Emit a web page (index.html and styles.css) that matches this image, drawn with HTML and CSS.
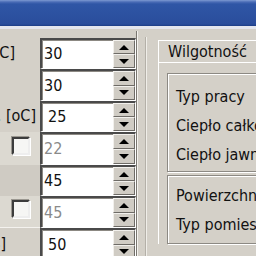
FILE: index.html
```html
<!DOCTYPE html>
<html lang="pl">
<head>
    <meta charset="UTF-8">
    <title>Parametry pomieszczenia</title>
    <link rel="stylesheet" href="styles.css">
</head>
<body>
    <div class="titlebar"></div>

    <div class="content">
        <!-- Lewa kolumna z parametrami -->
        <div class="params">
            <div class="row h31">
                <div class="lbl pr25">Temperatura [oC]</div>
                <div class="edit"><span class="val">30</span><div class="spin"><b class="up"></b><b class="down"></b></div></div>
            </div>
            <div class="row h32">
                <div class="lbl"></div>
                <div class="edit"><span class="val">30</span><div class="spin"><b class="up"></b><b class="down"></b></div></div>
            </div>
            <div class="row h31">
                <div class="lbl pr4">Temperatura zewn. [oC]</div>
                <div class="edit"><span class="val pad">25</span><div class="spin"><b class="up"></b><b class="down"></b></div></div>
            </div>
            <div class="row h33 light">
                <div class="lbl"><span class="check"></span></div>
                <div class="edit"><span class="val off">22</span><div class="spin"><b class="up"></b><b class="down"></b></div></div>
            </div>
            <div class="row h31 dark">
                <div class="lbl"></div>
                <div class="edit"><span class="val">45</span><div class="spin"><b class="up"></b><b class="down"></b></div></div>
            </div>
            <div class="row h32 light sep">
                <div class="lbl"><span class="check"></span></div>
                <div class="edit"><span class="val off">45</span><div class="spin"><b class="up"></b><b class="down"></b></div></div>
            </div>
            <div class="row h32">
                <div class="lbl pr34">Wilgotność względna [%]</div>
                <div class="edit"><span class="val pad">50</span><div class="spin"><b class="up"></b><b class="down"></b></div></div>
            </div>
        </div>

        <div class="splitter"><div class="bar"></div></div>

        <!-- Zakładki -->
        <div class="tabs">
            <div class="tabstrip">
                <div class="tab">Wilgotność</div>
            </div>
            <div class="page">
                <div class="group g1">
                    <div class="item">Typ pracy</div>
                    <div class="item">Ciepło całkowite</div>
                    <div class="item">Ciepło jawne</div>
                </div>
                <div class="group g2">
                    <div class="item">Powierzchnia</div>
                    <div class="item">Typ pomieszczenia</div>
                </div>
            </div>
        </div>
    </div>
</body>
</html>
```

FILE: styles.css
```css
body {
    margin: 0;
    width: 256px;
    height: 256px;
    overflow: hidden;
    background: #d4d0c8;
    font-family: "DejaVu Sans Condensed", "DejaVu Sans", sans-serif;
    font-stretch: condensed;
    font-size: 16px;
    color: #111;
}

/* Pasek tytułu */
.titlebar {
    height: 26px;
    background: linear-gradient(to bottom, #7d9ad2 0, #4a6cb6 2px, #2f56a6 4px, #2a4d9c 24px, #1d3d86 26px);
    border-bottom: 3px solid #e4e6ee;
}

.content {
    display: flex;
    padding-top: 2px;
}

/* Lewa kolumna */
.params {
    width: 136px;
    flex: none;
    padding-top: 7px;
    border-right: 1px solid #7a7770;
}

.row {
    display: flex;
}

.h31 { height: 31px; }
.h32 { height: 32px; }
.h33 { height: 33px; }

.lbl {
    width: 40px;
    flex: none;
    display: flex;
    justify-content: flex-end;
    align-items: center;
    white-space: nowrap;
    overflow: hidden;
    padding-bottom: 2px;
    box-sizing: border-box;
}

.pr25 { padding-right: 25px; }
.pr4 { padding-right: 4px; }
.pr34 { padding-right: 34px; }

.light .lbl { background: #dcd9d1; }
.dark .lbl { background: #cfcbc3; }
.sep .lbl { border-bottom: 1px solid #f4f2ee; }

.check {
    width: 14px;
    height: 14px;
    margin-right: 10px;
    margin-bottom: 4px;
    background: #f6f6f4;
    border-top: 2px solid #3c3c3c;
    border-left: 2px solid #3c3c3c;
    border-right: 2px solid #eeeeee;
    border-bottom: 2px solid #eeeeee;
    box-shadow: -1px -1px 0 #9a9790, 1px 1px 0 #ffffff;
}

/* Pole edycji z przyciskami */
.edit {
    flex: 1;
    display: flex;
    background: #ffffff;
    border-top: 2px solid #4a4a4a;
    border-left: 2px solid #4a4a4a;
    border-bottom: 1px solid #ffffff;
    border-right: 1px solid #ffffff;
    box-shadow: inset 1px 1px 0 #8c8983;
}

.val {
    flex: 1;
    display: flex;
    align-items: center;
    padding-left: 2px;
    padding-bottom: 1px;
}

.val.pad { padding-left: 6px; }
.val.off { color: #8a8a8a; }

.spin {
    width: 22px;
    display: flex;
    flex-direction: column;
}

.spin b {
    flex: 1;
    display: flex;
    justify-content: center;
    align-items: center;
    background: #d0ccc4;
    border-top: 1px solid #f2f0ec;
    border-left: 1px solid #f2f0ec;
    border-right: 1px solid #6e6b66;
    border-bottom: 1px solid #6e6b66;
}

.spin b::after {
    content: "";
    border-left: 5px solid transparent;
    border-right: 5px solid transparent;
}

.spin .up::after { border-bottom: 5px solid #000; }
.spin .down::after { border-top: 5px solid #000; }

/* Rozdzielacz */
.splitter {
    width: 21px;
    flex: none;
    border-left: 1px solid #f4f2ee;
    box-sizing: border-box;
    padding-left: 7px;
}

.splitter .bar {
    width: 1px;
    height: 240px;
    margin-top: 6px;
    background: #f0eee9;
    border-left: 1px solid #b4b0a8;
}

/* Kontrolka zakładek */
.tabs {
    width: 200px;
    flex: none;
}

.tabstrip {
    padding-top: 9px;
    display: flex;
}

.tab {
    height: 21px;
    padding-left: 9px;
    padding-right: 20px;
    display: flex;
    align-items: center;
    border-top: 1px solid #ffffff;
    border-left: 1px solid #ffffff;
    white-space: nowrap;
}

.page {
    border-top: 1px solid #ffffff;
    border-left: 1px solid #ffffff;
    padding: 10px 0 0 8px;
}

.group {
    border: 1px solid #8c8983;
    box-shadow: inset 1px 1px 0 #ffffff, 1px 1px 0 #ffffff;
    padding-left: 8px;
    white-space: nowrap;
}

.g1 {
    padding-top: 8px;
    padding-bottom: 2px;
    margin-bottom: 3px;
}

.g2 {
    padding-top: 5px;
    padding-bottom: 4px;
}

.item {
    height: 29px;
    display: flex;
    align-items: center;
}
```
